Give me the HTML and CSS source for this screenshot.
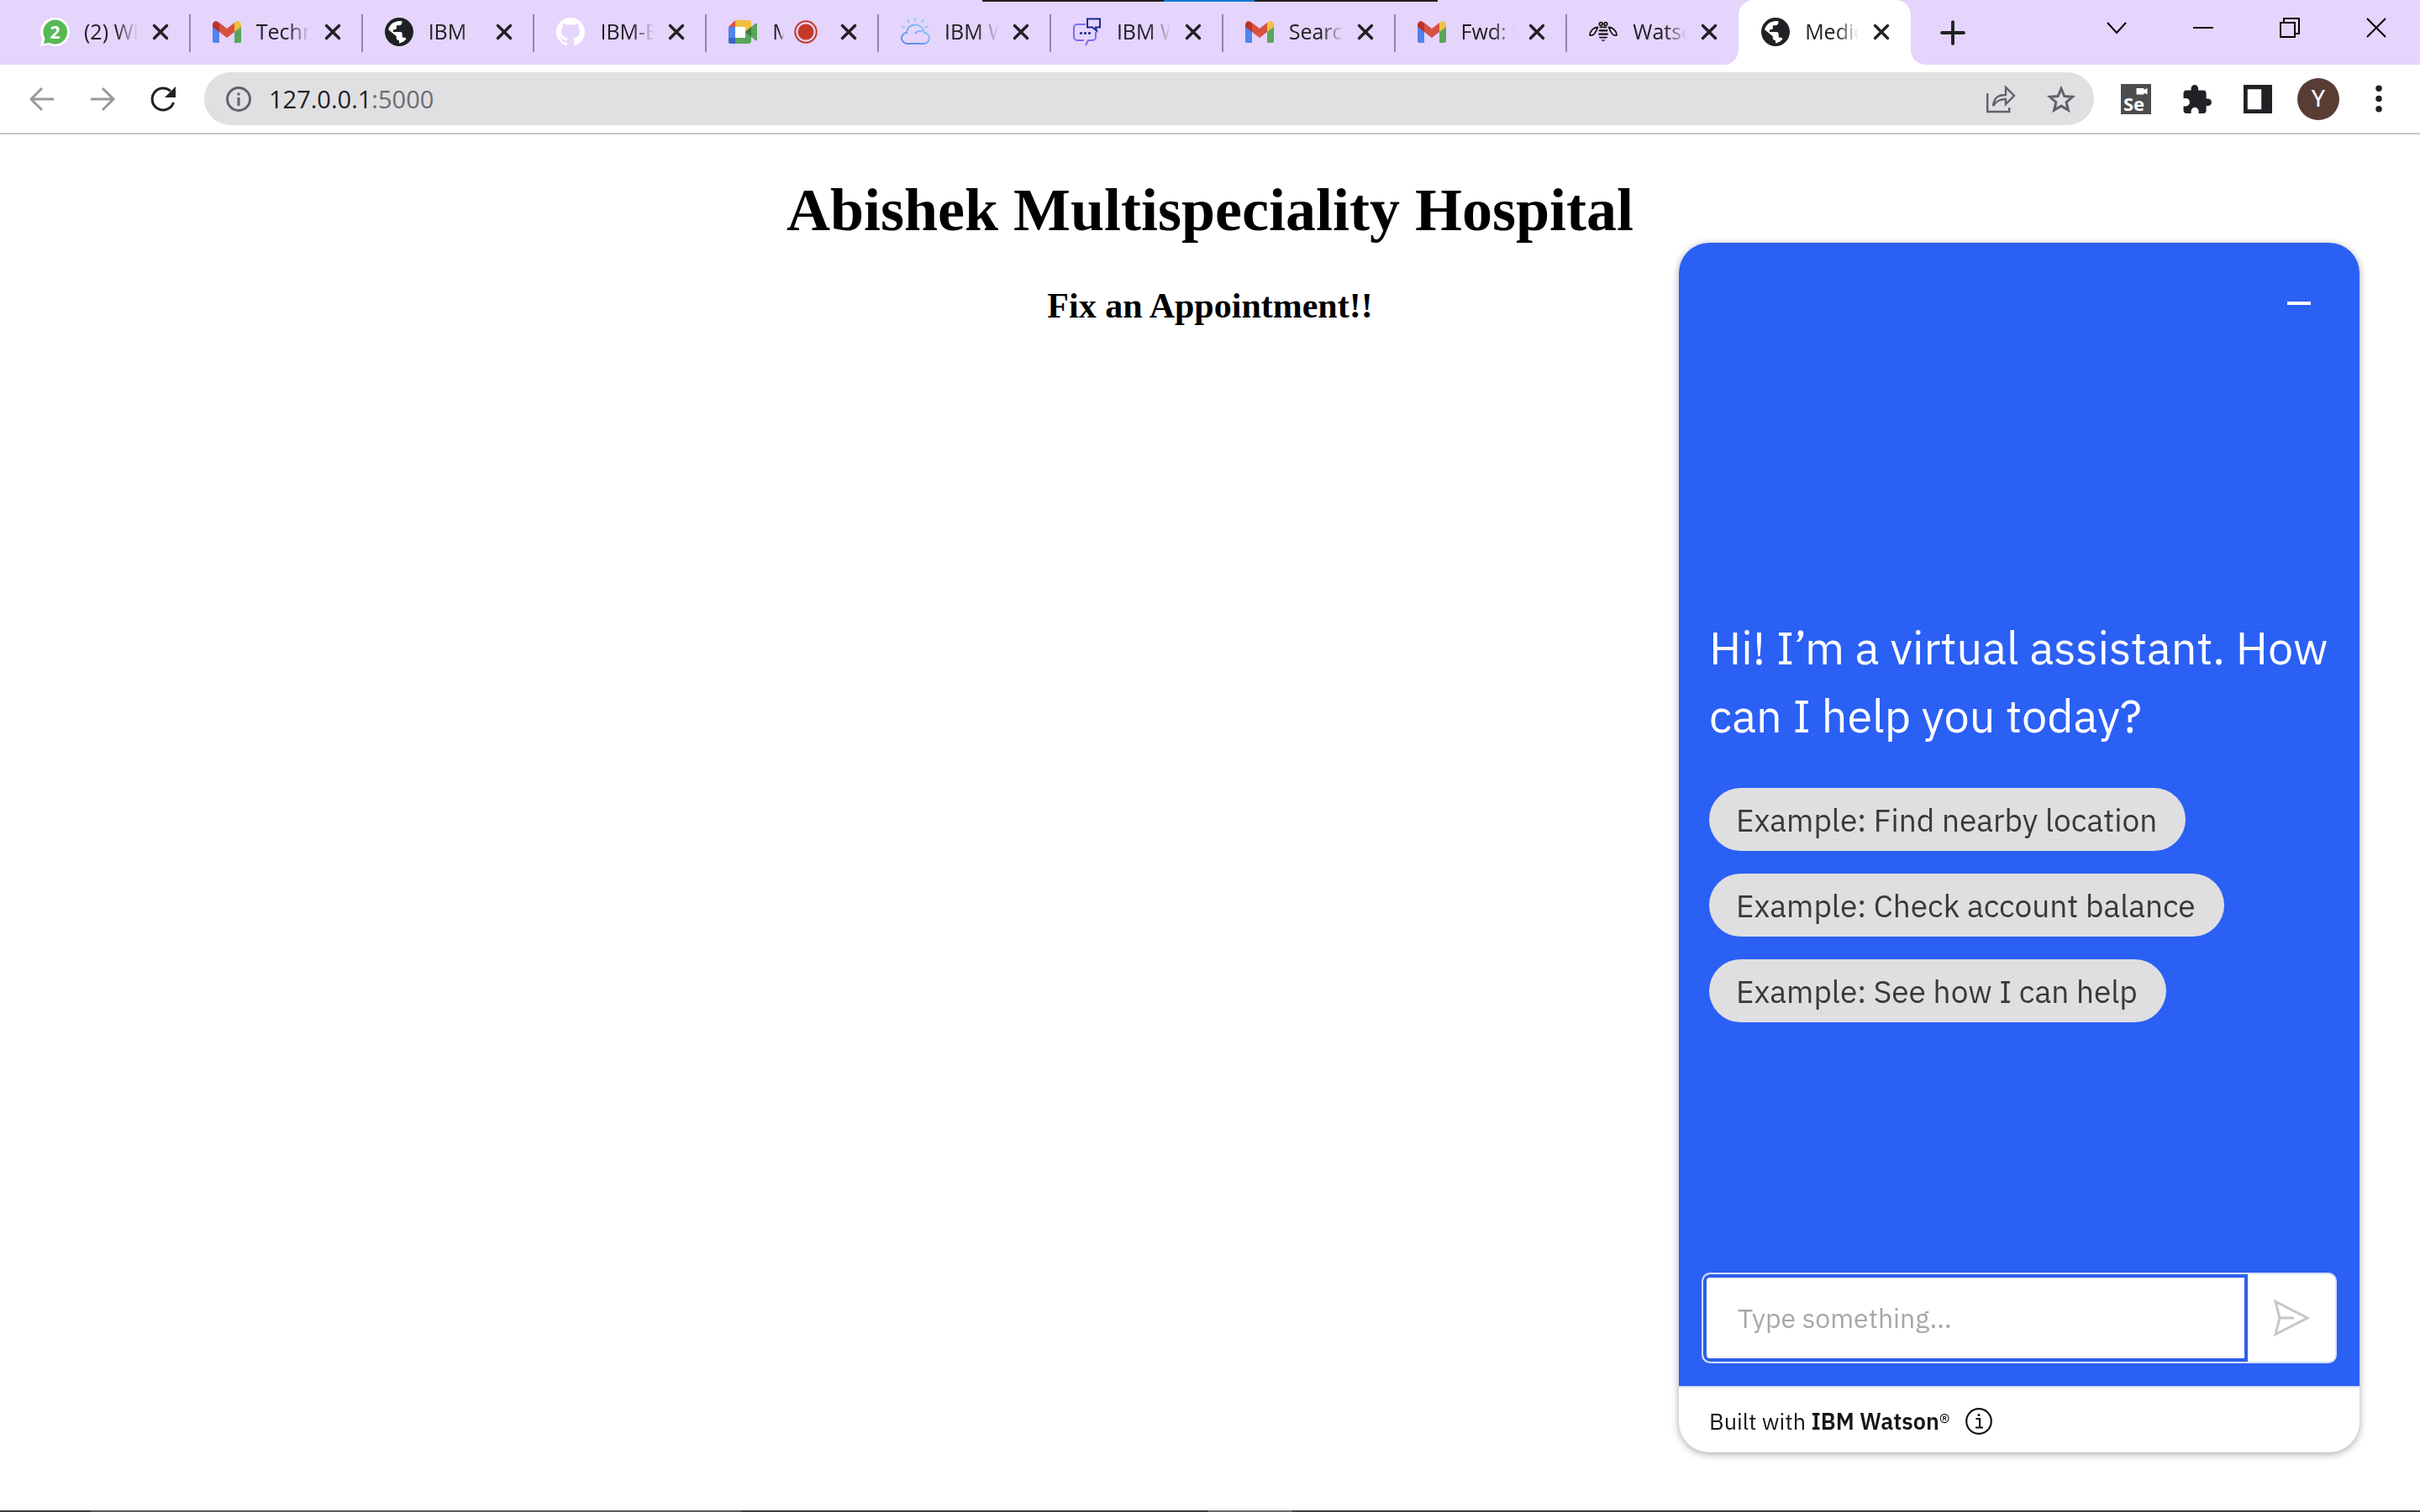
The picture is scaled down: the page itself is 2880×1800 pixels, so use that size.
FILE: index.html
```html
<!DOCTYPE html>
<html lang="en">
<head>
<meta charset="utf-8">
<title>Medical Assistant</title>
<link rel="stylesheet" href="styles.css">
</head>
<body>
<svg class="sprite" aria-hidden="true">
  <symbol id="i-x" viewBox="0 0 20 20"><path d="M2.500 2.500l15 15m0-15l-15 15" fill="none" stroke="#202124" stroke-width="3.400" stroke-linecap="round"/></symbol>
  <symbol id="i-gmail" viewBox="0 0 34 26">
    <path d="M0 5v19a2 2 0 0 0 2 2h6V11z" fill="#4f83ee"/><path d="M34 5v19a2 2 0 0 1-2 2h-6V11z" fill="#58a65c"/>
    <path d="M26 3v10l8-6V5c0-4.500-4-6-7-3.500z" fill="#f1bf42"/><path d="M8 3v10L0 7V5C0 .5 4-1 7 1.500z" fill="#b73329"/>
    <path d="M8 13V2l9 7 9-7v11l-9 7z" fill="#d85140"/></symbol>
  <symbol id="i-globe" viewBox="0 0 24 24"><circle cx="12" cy="12" r="12" fill="#202124"/>
    <path d="M9 3.500c2-.7 4-.8 5.500-.3 0 1.800-.6 3.300-2.300 3.300H9.800v2.300c0 .6-.5 1.200-1.200 1.200H7v2h6c1.200 0 1.600.9 1.600 1.700v2.800h1.200c1 0 1.900.6 2.200 1.500A9.500 9.500 0 0 1 12 21.500v-2.300c-1.300 0-2.300-1-2.300-2.300v-1.200l-6.800-5.600C3.500 7.200 6 4.300 9 3.500z" fill="#fff"/></symbol>
</svg>

<header class="browser">
  <nav class="tabs" aria-label="Tabs">
    <div class="tab-list">
      <div class="tab">
        <svg class="fav" viewBox="0 0 34 34"><path d="M17 0a17 17 0 1 1-7 32L0 34l2-9A17 17 0 0 1 17 0z" fill="#fff"/><path d="M17.500 2.500a14.500 14.500 0 1 1-6.500 27.400L4 31l1.500-6.500A14.500 14.500 0 0 1 17.500 2.500z" fill="#56b954"/><text x="17.500" y="24.500" text-anchor="middle" class="badge-num">2</text></svg>
        <span class="label">(2) WhatsApp</span><button class="close" aria-label="Close"><svg><use href="#i-x"/></svg></button>
      </div>
      <div class="tab"><svg class="fav gm"><use href="#i-gmail"/></svg><span class="label">Technical</span><button class="close" aria-label="Close"><svg><use href="#i-x"/></svg></button></div>
      <div class="tab"><svg class="fav"><use href="#i-globe"/></svg><span class="label">IBM</span><button class="close" aria-label="Close"><svg><use href="#i-x"/></svg></button></div>
      <div class="tab">
        <svg class="fav" viewBox="0 0 16 16"><path fill="#fff" d="M8 0C3.580 0 0 3.580 0 8c0 3.540 2.290 6.530 5.470 7.590.4.070.55-.17.55-.38 0-.19-.01-.82-.01-1.490-2.010.37-2.530-.49-2.690-.94-.09-.23-.48-.94-.82-1.130-.28-.15-.68-.52-.01-.53.63-.01 1.080.58 1.230.82.72 1.210 1.870.87 2.330.66.07-.52.28-.87.51-1.070-1.780-.2-3.640-.89-3.640-3.950 0-.87.31-1.590.82-2.150-.08-.2-.36-1.020.08-2.120 0 0 .67-.21 2.200.82.64-.18 1.320-.27 2-.27s1.360.09 2 .27c1.530-1.040 2.200-.82 2.200-.82.44 1.100.16 1.920.08 2.120.51.56.82 1.270.82 2.150 0 3.070-1.870 3.750-3.650 3.950.29.25.54.73.54 1.480 0 1.070-.01 1.930-.01 2.200 0 .21.15.46.55.38A8.010 8.010 0 0 0 16 8c0-4.420-3.580-8-8-8z"/></svg>
        <span class="label">IBM-EPBL</span><button class="close" aria-label="Close"><svg><use href="#i-x"/></svg></button>
      </div>
      <div class="tab">
        <svg class="fav" viewBox="0 0 34 34"><path d="M0 11h8v13H0z" fill="#4f83ee"/><path d="M0 24h8v7H2a2 2 0 0 1-2-2z" fill="#3b66c4"/><path d="M8 3v8H0z" fill="#d85140"/><path d="M8 3h16a3 3 0 0 1 3 3v8l-7 4v-7H8z" fill="#f1bf42"/><path d="M8 24h12v-7l7 3v8a3 3 0 0 1-3 3H8z" fill="#58a65c"/><path d="M20 17l12-10q2-1 2 1v18q0 2-2 1z" fill="#58a65c"/><path d="M20 17l7-6v12z" fill="#377a3c"/><path d="M8 11h12v13H8z" fill="#fff"/></svg>
        <span class="label short">Meet</span>
        <svg class="rec" viewBox="0 0 28 28"><circle cx="14" cy="14" r="12.700" fill="none" stroke="#c53929" stroke-width="2"/><circle cx="14" cy="14" r="9.500" fill="#c53929"/></svg>
        <button class="close" aria-label="Close"><svg><use href="#i-x"/></svg></button>
      </div>
      <div class="tab">
        <svg class="fav" viewBox="0 0 34 34" fill="none" stroke-width="1.800"><defs><linearGradient id="g1" x1="0" y1="1" x2="1" y2="0"><stop offset="0" stop-color="#4a7cf0"/><stop offset="1" stop-color="#8fd3f5"/></linearGradient></defs><path d="M8 31h19a6.500 6.500 0 0 0 5-11c-1-1.500-3-2-4-2A11 11 0 0 0 17 8.500C11 8.500 7 13 7 18 3 18.500 1 21.500 1 24.500s3 6.500 7 6.500zM17 19c2-3 6-4 9-2.500" stroke="url(#g1)"/><path d="M17 0v4M8 2l2 4M27 2l-2 4M1 10l4 2M33 10l-4 2" stroke="#7fd0ee"/></svg>
        <span class="label">IBM Watson</span><button class="close" aria-label="Close"><svg><use href="#i-x"/></svg></button>
      </div>
      <div class="tab">
        <svg class="fav" viewBox="0 0 34 34" fill="none" stroke-width="2"><path d="M15 8H5a4 4 0 0 0-4 4v11a4 4 0 0 0 4 4h8m2 6l3-6h5a4 4 0 0 0 4-4v-6" stroke="#7a6ff0"/><path d="M17 1.500h15v10h-5l1 4-5-4h-6z" stroke="#1c2b8c"/><path d="M8 18.500h3m2 0h3m2 0h3" stroke="#1c2b8c" stroke-width="2.600"/></svg>
        <span class="label">IBM Watson</span><button class="close" aria-label="Close"><svg><use href="#i-x"/></svg></button>
      </div>
      <div class="tab"><svg class="fav gm"><use href="#i-gmail"/></svg><span class="label">Search</span><button class="close" aria-label="Close"><svg><use href="#i-x"/></svg></button></div>
      <div class="tab"><svg class="fav gm"><use href="#i-gmail"/></svg><span class="label">Fwd: IBM</span><button class="close" aria-label="Close"><svg><use href="#i-x"/></svg></button></div>
      <div class="tab last">
        <svg class="fav bee" viewBox="0 0 36 26"><g fill="none" stroke="#111" stroke-width="1.800"><path d="M11 7C6 7 1 12 1 17c4 2 8-3 10-10zM25 7c5 0 10 5 10 10-4 2-8-3-10-10z"/><circle cx="15" cy="3" r="2"/><circle cx="21" cy="3" r="2"/></g><path d="M14 6h8l1 2H13zM12.500 10h11v2.500h-11zM12 14.500h12V17H12zM12.500 19h11l-1 2h-9zM15 23h6l-3 2z" fill="#111"/></svg>
        <span class="label">Watson</span><button class="close" aria-label="Close"><svg><use href="#i-x"/></svg></button>
      </div>
      <div class="tab active" aria-current="page"><svg class="fav"><use href="#i-globe"/></svg><span class="label">Medical</span><button class="close" aria-label="Close"><svg><use href="#i-x"/></svg></button></div>
    </div>
    <button class="new-tab" aria-label="New tab"><svg viewBox="0 0 26 26"><path d="M13 1v24M1 13h24" stroke="#202124" stroke-width="3.600" stroke-linecap="round"/></svg></button>
    <div class="window-controls">
      <button aria-label="Search tabs"><svg viewBox="0 0 24 24"><path d="M1 6l11 12L23 6"/></svg></button>
      <button aria-label="Minimize"><svg viewBox="0 0 24 24"><path d="M0 12h24"/></svg></button>
      <button aria-label="Restore"><svg viewBox="0 0 24 24"><path d="M1 6h17v17H1zM5 6V1h18v18h-5"/></svg></button>
      <button aria-label="Close window"><svg viewBox="0 0 24 24"><path d="M1 1l22 22M23 1L1 23"/></svg></button>
    </div>
  </nav>

  <div class="toolbar">
    <button class="nav off" aria-label="Back"><svg viewBox="0 0 30 30"><path d="M29 15H3M15 2L2 15l13 13"/></svg></button>
    <button class="nav off" aria-label="Forward"><svg viewBox="0 0 30 30"><path d="M1 15h26M15 2l13 13-13 13"/></svg></button>
    <button class="nav" aria-label="Reload"><svg viewBox="0 0 30 30"><path d="M27.500 19A13 13 0 1 1 24 5.500" /><path d="M30 0v13H17z" class="fill"/></svg></button>
    <div class="omnibox">
      <svg class="info" viewBox="0 0 30 30"><circle cx="15" cy="15" r="13.500" fill="none" stroke="#5f6368" stroke-width="3"/><path d="M13.500 7.500h3v3h-3zM13.500 13h3v10h-3z" fill="#5f6368"/></svg>
      <span class="url">127.0.0.1<span class="port">:5000</span></span>
      <button aria-label="Share"><svg viewBox="0 0 34 32"><path d="M1.200 9v22h26v-5M8 24c1-9 5-13 15-13V2l10 10-10 10v-6c-7 0-11 2-15 8z"/></svg></button>
      <button aria-label="Bookmark"><svg viewBox="0 0 34 32"><path d="M17 3.500l3.800 9 9.700.8-7.400 6.400 2.300 9.500-8.400-5.100-8.400 5.100 2.300-9.500-7.400-6.400 9.700-.8z" stroke-width="3"/></svg></button>
    </div>
    <div class="extensions">
      <button aria-label="Selenium IDE"><svg class="se" viewBox="0 0 36 36"><path d="M0 0h36v36H0z" fill="#4d4d4d"/><path d="M18.500 5h9v2l4-2v7.500l-4-2v2h-9z" fill="#fff"/><text x="3" y="31.500">Se</text></svg></button>
      <button aria-label="Extensions"><svg viewBox="0 0 32 32"><path d="M28 15.500h-2V9.500a3.500 3.500 0 0 0-3.500-3.500H17V4a4 4 0 0 0-8 0v2H4a3.500 3.500 0 0 0-3.500 3.500v5.500H3a4 4 0 0 1 0 9H.5v4.500A3.500 3.500 0 0 0 4 32h5v-2.500a4 4 0 0 1 8.500 0V32h5a3.500 3.500 0 0 0 3.500-3.500v-5h2a4 4 0 0 0 0-8z" fill="#202124"/></svg></button>
      <button aria-label="Side panel"><svg viewBox="0 0 32 32"><path d="M0 0h32v32H0zM4.500 5v22.500H20V5z" fill="#202124" fill-rule="evenodd"/></svg></button>
      <button class="avatar" aria-label="Profile">Y</button>
      <button class="dots" aria-label="Menu"><svg viewBox="0 0 32 32"><circle cx="16" cy="4" r="3.500"/><circle cx="16" cy="15.500" r="3.500"/><circle cx="16" cy="27" r="3.500"/></svg></button>
    </div>
  </div>
  <div class="share-edge"></div>
</header>

<main class="page">
  <h1>Abishek Multispeciality Hospital</h1>
  <h3>Fix an Appointment!!</h3>
</main>

<section class="chat" aria-label="Virtual assistant">
  <div class="chat-body">
    <button class="minimize" aria-label="Minimize chat"><svg viewBox="0 0 28 4"><path d="M0 0h28v4H0z" fill="#fff"/></svg></button>
    <div class="home">
      <p class="greeting">Hi! I’m a virtual assistant. How can I help you today?</p>
      <button class="chip">Example: Find nearby location</button>
      <button class="chip">Example: Check account balance</button>
      <button class="chip">Example: See how I can help</button>
    </div>
    <form class="composer">
      <input type="text" aria-label="Message" placeholder="Type something...">
      <button type="button" aria-label="Send"><svg viewBox="0 0 42 42"><path d="M2 1.500L40 21 2 40.500 7 21zM7 21h17"/></svg></button>
    </form>
  </div>
  <footer class="chat-footer">
    <span>Built with <strong>IBM Watson</strong>®</span>
    <svg viewBox="0 0 32 32"><circle cx="16" cy="16" r="14.800" fill="none" stroke="#161616" stroke-width="2.200"/><path d="M12.500 13h4.600v10M12 23.500h9" fill="none" stroke="#161616" stroke-width="2.200"/><circle cx="16" cy="8.500" r="1.600" fill="#161616"/></svg>
  </footer>
</section>
<div class="taskbar-edge"></div>
</body>
</html>
```

FILE: styles.css
```css
* { box-sizing: border-box; }

body {
  margin: 0;
  min-height: 100vh;
  background: #fff;
  font-family: "Liberation Serif", serif;
  font-size: 36px;
  color: #000;
}

button {
  margin: 0;
  padding: 0;
  border: 0;
  background: none;
  font: inherit;
  color: inherit;
}

svg { display: block; overflow: visible; }
.sprite { position: absolute; width: 0; height: 0; }

.browser {
  position: relative;
  font-family: "Open Sans", "Noto Sans", sans-serif;
  border-bottom: 2px solid #c8c8c8;
}

/* Tab strip */
.tabs {
  display: flex;
  height: 77px;
  padding-left: 21px;
  background: #e5d4fb;
}

.tab-list { display: flex; flex: 0 1 2253px; }

.tab {
  position: relative;
  display: flex;
  align-items: center;
  flex: 1;
  min-width: 0;
  padding: 0 25px 2px 27px;
}

.tab::after {
  content: "";
  position: absolute;
  right: -1px;
  top: 17px;
  width: 2px;
  height: 45px;
  background: #9585a8;
}

.tab.last::after, .tab.active::after { display: none; }

.fav { flex: none; width: 34px; height: 34px; }
.fav.gm { height: 26px; }
.fav.bee { height: 26px; }
.badge-num { font: bold 21px "Open Sans", sans-serif; fill: #fff; }

.label {
  width: 64px;
  margin: 0 0 2px 18px;
  overflow: hidden;
  white-space: nowrap;
  font-size: 25px;
  line-height: 40px;
  color: #202124;
  -webkit-mask-image: linear-gradient(90deg, #000 60%, transparent);
  mask-image: linear-gradient(90deg, #000 60%, transparent);
}

.label.short { width: 14px; }
.rec { width: 28px; height: 28px; margin-left: 12px; }
.close { margin-left: auto; }
.close svg { width: 20px; height: 20px; }

.active {
  background: #fff;
  border-radius: 18px 18px 0 0;
}

.active::before {
  content: "";
  position: absolute;
  left: -18px;
  right: -18px;
  bottom: 0;
  height: 18px;
  background:
    radial-gradient(circle at 0 0, transparent 18px, #fff 18px) left / 18px 18px no-repeat,
    radial-gradient(circle at 100% 0, transparent 18px, #fff 18px) right / 18px 18px no-repeat;
}

.new-tab { margin-left: 36px; }
.new-tab svg { width: 28px; height: 28px; }

.window-controls {
  display: flex;
  gap: 79px;
  height: 66px;
  margin-left: auto;
  padding-right: 40px;
}

.window-controls svg {
  width: 24px;
  height: 24px;
  fill: none;
  stroke: #000;
  stroke-width: 2;
}

/* Address bar */
.toolbar {
  display: flex;
  align-items: center;
  height: 81px;
  padding: 0 32px 0 35px;
  background: #fff;
}

.nav { margin-right: 42px; }

.nav svg {
  width: 30px;
  height: 30px;
  fill: none;
  stroke: #202124;
  stroke-width: 3;
}

.nav .fill { fill: #202124; stroke: none; }
.nav.off svg { stroke: #9a9a9c; }

.omnibox {
  flex: 1;
  display: flex;
  align-items: center;
  height: 63px;
  margin-left: -8px;
  padding: 0 22px 0 26px;
  border-radius: 32px;
  background: #e0e0e2;
}

.info { width: 30px; height: 30px; }
.url { flex: 1; margin-left: 21px; font-size: 29px; line-height: 40px; color: #202124; }
.port { color: #6a6c70; }
.omnibox button { margin-left: 38px; }

.omnibox button svg {
  width: 34px;
  height: 32px;
  fill: none;
  stroke: #5f6368;
  stroke-width: 2.400;
}

.extensions {
  display: flex;
  align-items: center;
  gap: 38px;
  margin-left: 32px;
}

.extensions svg { width: 34px; height: 34px; }
.extensions .se { width: 36px; height: 36px; }
.se text { font: bold 22px "Open Sans", sans-serif; fill: #fff; }

.avatar {
  width: 50px;
  height: 50px;
  margin: 0 -8px;
  border-radius: 50%;
  background: #593d34;
  color: #fff;
  font-family: Roboto, sans-serif;
  font-size: 28px;
  line-height: 50px;
}

.dots svg { fill: #202124; }

/* Slivers of other windows at the screen edges */
.share-edge {
  position: absolute;
  top: 0;
  left: 1169px;
  width: 542px;
  height: 2px;
  background: linear-gradient(90deg, #201c1e 216px, #0a78d4 216px 324px, #201c1e 324px);
}

.taskbar-edge {
  position: fixed;
  left: 0;
  right: 0;
  bottom: 0;
  height: 2px;
  background: linear-gradient(90deg, #404040 108px, #5a5a5a 108px 882px, #404040 882px 1438px, #6a6a6a 1438px 1538px, #404040 1538px);
}

/* Page */
.page { padding: 1px 14px; text-align: center; }
h1 { margin: 48px 0; font-size: 72px; line-height: 83px; }
h3 { margin: 0; font-size: 42px; line-height: 48px; }

/* Chat widget */
.chat {
  position: fixed;
  right: 72px;
  bottom: 71px;
  display: flex;
  flex-direction: column;
  width: 810px;
  height: 80vh;
  overflow: hidden;
  border-radius: 36px;
  background: #fff;
  box-shadow: 0 2px 10px rgba(0, 0, 0, 0.35);
  font-family: "IBM Plex Sans", "Noto Sans", sans-serif;
}

.chat-body {
  flex: 1;
  display: flex;
  flex-direction: column;
  padding: 70px 27px 27px;
  background: #2b60f5;
}

.minimize { align-self: flex-end; margin-right: 31px; }
.minimize svg { width: 28px; height: 4px; }

.home {
  flex: 1;
  display: flex;
  flex-direction: column;
  align-items: flex-start;
  justify-content: center;
  gap: 27px;
  padding: 70px 0 0 9px;
}

.greeting {
  margin: 0 0 18px;
  color: #fff;
  font-size: 54px;
  line-height: 81px;
}

.chip {
  height: 75px;
  padding: 0 34px 0 32px;
  border-radius: 38px;
  background: #dfdfe1;
  color: #393939;
  font-size: 37px;
}

.composer {
  display: flex;
  height: 108px;
  border: 2px solid #d5e0fb;
  border-radius: 10px;
  background: #fff;
  overflow: hidden;
}

.composer input {
  flex: 1;
  min-width: 0;
  padding: 0 37px;
  border: 4px solid #2b60e8;
  border-radius: 8px 0 0 8px;
  background: #fff;
  color: #161616;
  font: 32px "IBM Plex Sans", "Noto Sans", sans-serif;
  outline: 0;
}

.composer input::placeholder { color: #a8a8a8; opacity: 1; }
.composer button { width: 104px; display: grid; place-items: center; }

.composer button svg {
  width: 42px;
  height: 42px;
  fill: none;
  stroke: #c6c6c6;
  stroke-width: 3;
}

.chat-footer {
  display: flex;
  align-items: center;
  gap: 18px;
  height: 79px;
  padding: 3px 0 0 36px;
  border-top: 2px solid #dbe2f8;
  color: #161616;
  font-size: 27px;
  line-height: 36px;
}

.chat-footer strong { font-weight: 600; }
.chat-footer svg { width: 32px; height: 32px; }
```
